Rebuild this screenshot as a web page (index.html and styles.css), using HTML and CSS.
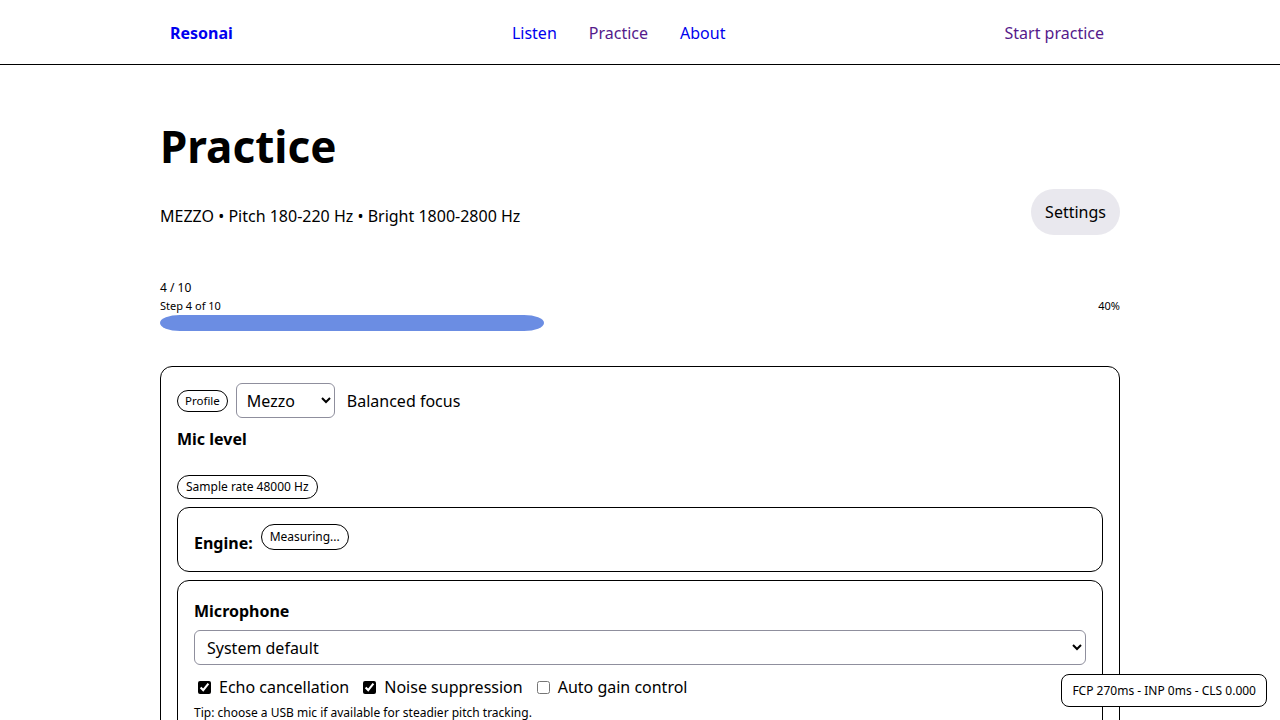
FILE: index.html
```html
<!DOCTYPE html>
<html lang="en">
<head>
<meta charset="utf-8">
<title>Resonai – Practice</title>
<link rel="stylesheet" href="styles.css">
</head>
<body>
<header class="site-header">
  <a class="brand" href="#">Resonai</a>
  <nav class="main-nav">
    <a class="nav-link" href="#">Listen</a>
    <a class="nav-link visited" href="#">Practice</a>
    <a class="nav-link" href="#">About</a>
  </nav>
  <a class="nav-link visited" href="#">Start practice</a>
</header>
<main class="page">
  <h1 class="title">Practice</h1>
  <div class="subhead">
    <p class="summary">MEZZO • Pitch 180-220 Hz • Bright 1800-2800 Hz</p>
    <button class="btn-settings" type="button">Settings</button>
  </div>
  <section class="progress">
    <div class="progress-count">4 / 10</div>
    <div class="progress-meta">
      <span>Step 4 of 10</span>
      <span>40%</span>
    </div>
    <div class="progress-track"><div class="progress-fill" style="width:40%"></div></div>
  </section>
  <section class="card">
    <div class="profile-row">
      <span class="pill pill-sm">Profile</span>
      <select class="select select-sm"><option>Mezzo</option></select>
      <span class="profile-desc">Balanced focus</span>
    </div>
    <h2 class="label">Mic level</h2>
    <div class="meter"></div>
    <span class="pill">Sample rate 48000 Hz</span>
    <div class="box engine-box">
      <span class="label-inline">Engine:</span>
      <span class="pill">Measuring...</span>
    </div>
    <div class="box mic-box">
      <h2 class="label">Microphone</h2>
      <select class="select select-wide"><option>System default</option></select>
      <div class="checks">
        <label class="check"><input type="checkbox" checked> Echo cancellation</label>
        <label class="check"><input type="checkbox" checked> Noise suppression</label>
        <label class="check"><input type="checkbox"> Auto gain control</label>
      </div>
      <p class="tip">Tip: choose a USB mic if available for steadier pitch tracking.</p>
    </div>
  </section>
</main>
<div class="vitals">FCP 270ms - INP 0ms - CLS 0.000</div>
</body>
</html>
```

FILE: styles.css
```css
* { box-sizing: border-box; }
html, body { margin: 0; padding: 0; }
body {
  font-family: "Noto Sans", "Open Sans", sans-serif;
  font-size: 16px;
  color: #000;
  background: #fff;
}
.site-header {
  height: 65px;
  border-bottom: 1px solid #000;
  display: flex;
  align-items: center;
  justify-content: space-between;
  padding: 2px 176px 0 170px;
}
.brand {
  color: #0000ee;
  font-weight: 700;
  text-decoration: none;
}
.main-nav { display: flex; gap: 32px; }
.nav-link { color: #0000ee; text-decoration: none; }
.nav-link.visited { color: #551a8b; }
.page {
  width: 960px;
  margin: 0 auto;
  padding-top: 55px;
}
.title {
  font-size: 44px;
  font-weight: 700;
  margin: 0 0 17px;
  line-height: 52px;
}
.subhead {
  display: flex;
  align-items: center;
  justify-content: space-between;
}
.summary { margin: 0; position: relative; top: 4px; }
.btn-settings {
  font: inherit;
  background: #e9e8ee;
  border: 0;
  border-radius: 23px;
  height: 46px;
  padding: 0 14px;
  color: #000;
}
.progress { margin-top: 44px; }
.progress-count { font-size: 12px; line-height: 18px; }
.progress-meta {
  display: flex;
  justify-content: space-between;
  font-size: 11px;
  line-height: 18px;
}
.progress-track { height: 16px; }
.progress-fill {
  height: 16px;
  background: #6b8de3;
  border-radius: 20px / 8px;
}
.card {
  margin-top: 35px;
  border: 1px solid #000;
  border-radius: 12px;
  padding: 16px 16px 16px;
}
.profile-row {
  display: flex;
  align-items: center;
  gap: 8px;
}
.pill {
  display: inline-block;
  border: 1px solid #000;
  border-radius: 999px;
  font-size: 12px;
  line-height: 16px;
  padding: 3px 8px;
}
.pill-sm { font-size: 11.5px; padding: 2px 7px; }
.select {
  font: inherit;
  height: 35px;
  border: 1px solid #8f8f9d;
  border-radius: 6px;
  background: #fff;
  padding: 0 6px;
  color: #000;
}
.select-sm { width: 99px; }
.profile-desc { margin-left: 4px; }
.label {
  font-size: 16px;
  font-weight: 700;
  margin: 10px 0 0;
}
.meter { height: 24px; }
.box {
  border: 1px solid #000;
  border-radius: 12px;
  padding: 16px;
  margin-top: 8px;
}
.engine-box {
  display: flex;
  align-items: flex-start;
  gap: 8px;
  height: 65px;
}
.engine-box .pill { padding: 4px 8px; }
.label-inline { font-weight: 700; margin-top: 8px; }
.mic-box .label { margin: 3px 0 8px; }
.select-wide { width: 100%; padding: 0 8px; }
.checks { display: flex; gap: 14px; margin-top: 11px; padding-left: 4px; }
.check { display: flex; align-items: center; gap: 4px; }
.check input { width: 13px; height: 13px; margin: 0 4px 0 0; accent-color: #000; }
.tip { font-size: 12px; margin: 6px 0 0; }
.vitals {
  position: fixed;
  right: 13px;
  bottom: 13px;
  background: #fff;
  border: 1px solid #000;
  border-radius: 8px;
  font-size: 12px;
  padding: 7px 10px;
}
```
